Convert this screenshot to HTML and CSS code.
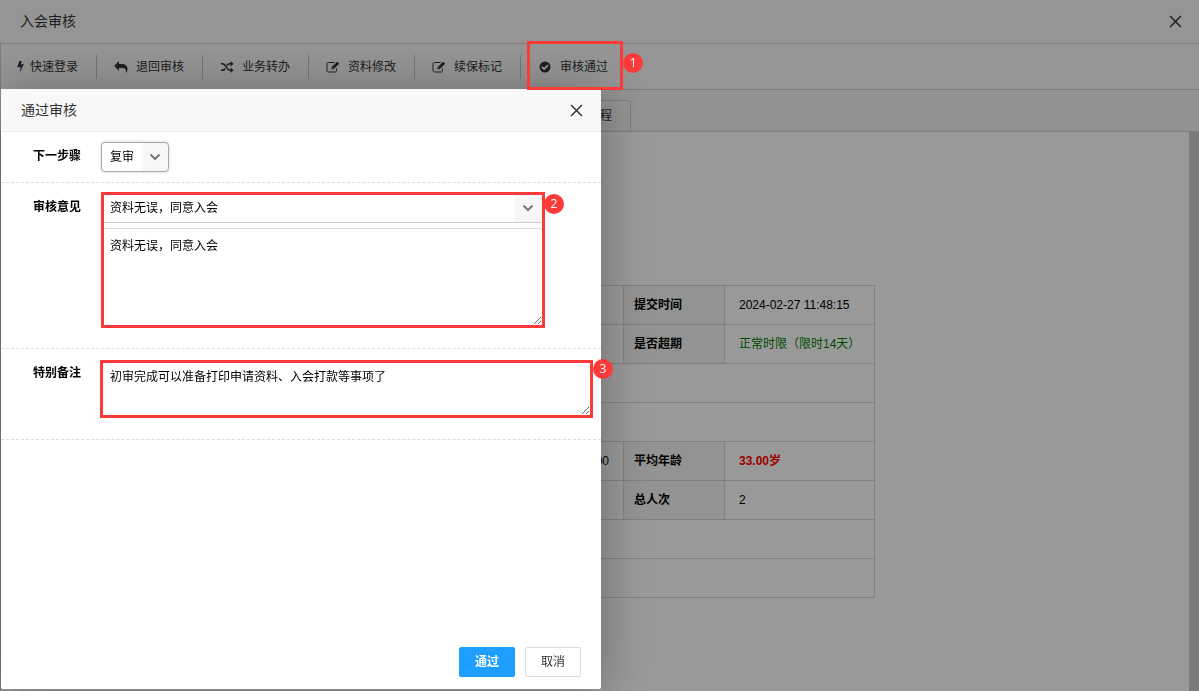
FILE: index.html
```
<!DOCTYPE html>
<html lang="zh-CN">
<head>
<meta charset="utf-8">
<title>入会审核</title>
<link rel="stylesheet" href="styles.css">
</head>
<body>
<div class="page">
  <header class="page-head">
    <h1 class="title">入会审核</h1>
    <button class="close" type="button" aria-label="关闭"><svg viewBox="0 0 12 12"><path d="M1 1l10 10M11 1L1 11"/></svg></button>
  </header>
  <nav class="toolbar">
    <button class="tool tool-first" type="button"><svg class="icon icon-bolt" viewBox="0 0 7 12"><path d="M2.4 0h2.5L3.7 3.5 7 2.8 2.6 12 3.7 5.7.2 6.5z"/></svg>快速登录</button>
    <button class="tool" type="button"><svg class="icon" viewBox="0 0 14 12"><path d="M5 0v3h2.5C11.500 3 13.500 5 13.500 8c0 1.600-.6 3-1.500 4 .5-3.800-1.400-5-4.500-5H5v3L.2 5z"/></svg>退回审核</button>
    <button class="tool" type="button"><svg class="icon" viewBox="0 0 14 12"><path class="stroke" d="M1 2.700h1.500c3.700 0 4 6.600 7.500 6.600h1.500M1 9.300h1.500c1.200 0 2-.8 2.600-1.800M6.900 4.500C7.500 3.500 8.500 2.700 9.800 2.700h1.700"/><path d="M10.500 0l3 2.700-3 2.700zM10.500 6.600l3 2.700-3 2.700z"/></svg>业务转办</button>
    <button class="tool" type="button"><svg class="icon" viewBox="0 0 14 12"><path class="thin" d="M8.500 1.500h-6c-1 0-1.500.5-1.500 1.500v6.500c0 1 .5 1.500 1.500 1.500h6.500c1 0 1.500-.5 1.500-1.500V7.500"/><path d="M11.200.7l2 2-5.700 5.600H5.400V6.300zM6.200 6.600v1h1v-.5l-.6-.5z" fill-rule="evenodd"/></svg>资料修改</button>
    <button class="tool" type="button"><svg class="icon" viewBox="0 0 14 12"><path class="thin" d="M8.500 1.500h-6c-1 0-1.500.5-1.500 1.500v6.500c0 1 .5 1.500 1.500 1.500h6.500c1 0 1.500-.5 1.500-1.500V7.500"/><path d="M11.200.7l2 2-5.700 5.600H5.400V6.300zM6.200 6.600v1h1v-.5l-.6-.5z" fill-rule="evenodd"/></svg>续保标记</button>
    <button class="tool tool-last" type="button"><svg class="icon" viewBox="0 0 14 12"><circle cx="7" cy="6" r="5.500"/><path class="tick" d="M4 5.800l2.200 2.200 3.800-3.800"/></svg>审核通过<span class="mark mark-tool"><span class="badge">1</span></span></button>
  </nav>
  <div class="tabs"><button class="tab" type="button">流程</button></div>
  <main class="content">
    <table class="info">
      <colgroup><col class="c-label"><col><col class="c-label"><col class="c-mid"><col class="c-label"><col class="c-value"></colgroup>
      <tr><th></th><td></td><th></th><td></td><th>提交时间</th><td>2024-02-27 11:48:15</td></tr>
      <tr><th></th><td></td><th></th><td></td><th>是否超期</th><td class="ok">正常时限（限时14天）</td></tr>
      <tr><th></th><td colspan="5"></td></tr>
      <tr><th></th><td colspan="5"></td></tr>
      <tr><th></th><td></td><th></th><td class="num">0.00</td><th>平均年龄</th><td class="warn">33.00岁</td></tr>
      <tr><th></th><td></td><th></th><td></td><th>总人次</th><td>2</td></tr>
      <tr><th></th><td colspan="5"></td></tr>
      <tr><th></th><td colspan="5"></td></tr>
    </table>
  </main>
</div>
<div class="shade"></div>
<section class="dialog" role="dialog" aria-labelledby="dialog-title">
  <header class="dialog-head">
    <h2 class="title" id="dialog-title">通过审核</h2>
    <button class="close" type="button" aria-label="关闭"><svg viewBox="0 0 12 12"><path d="M1 1l10 10M11 1L1 11"/></svg></button>
  </header>
  <form class="form">
    <div class="row">
      <label class="label" for="step">下一步骤</label>
      <div class="pick pick-small"><select id="step"><option>复审</option></select><svg class="chevron" viewBox="0 0 12 8"><path d="M1.500 1.500L6 6l4.500-4.500"/></svg></div>
    </div>
    <div class="row row-opinion">
      <label class="label" for="opinion">审核意见</label>
      <div class="field field-opinion">
        <div class="pick"><select id="preset" aria-label="常用意见"><option>资料无误，同意入会</option></select><svg class="chevron" viewBox="0 0 12 8"><path d="M1.500 1.500L6 6l4.500-4.500"/></svg></div>
        <textarea class="area area-tall" id="opinion">资料无误，同意入会</textarea>
        <span class="mark"><span class="badge">2</span></span>
      </div>
    </div>
    <div class="row row-note">
      <label class="label" for="note">特别备注</label>
      <div class="field field-note">
        <textarea class="area" id="note">初审完成可以准备打印申请资料、入会打款等事项了</textarea>
        <span class="mark"><span class="badge">3</span></span>
      </div>
    </div>
  </form>
  <footer class="actions">
    <button class="btn btn-main" type="button">通过</button>
    <button class="btn" type="button">取消</button>
  </footer>
</section>
</body>
</html>
```
FILE: styles.css
```
* { box-sizing: border-box; }
body, button, select, textarea {
  font-family: "Liberation Sans", "Noto Sans CJK SC", sans-serif;
  font-size: 12px;
  line-height: 18px;
  color: #000;
}
body { margin: 0; overflow: hidden; }
button { padding: 0; border: 0; background: none; }

.page { display: flex; flex-direction: column; height: 100vh; }
.page-head, .dialog-head {
  display: flex;
  align-items: center;
  justify-content: space-between;
  flex: none;
  height: 43px;
  padding: 0 18px 0 20px;
  background: #f8f8f8;
  border-bottom: 1px solid #eee;
}
.page-head { height: 44px; padding-right: 17px; border-color: #d0d0d0; }
.title { margin: 0; font-size: 14px; line-height: 20px; font-weight: 400; color: #333; }
.page-head .title { padding-bottom: 2px; }
.close { display: flex; padding: 0; }
.close svg { width: 13px; height: 13px; fill: none; stroke: #2e2d3c; stroke-width: 1.3; }

.toolbar {
  display: flex;
  align-items: center;
  flex: none;
  height: 46px;
  background: #f9f9f9;
  border-bottom: 1px solid #d0d0d0;
  border-left: 1px solid #d0d0d0;
}
.tool {
  position: relative;
  display: flex;
  align-items: center;
  gap: 8px;
  height: 24px;
  padding: 0 18px 0 17px;
  border-right: 1px solid #c4c4c4;
  color: #333;
}
.tool-first { gap: 6px; padding-left: 16px; }
.tool-last { padding-right: 15px; border-right: 0; }
.icon { width: 14px; height: 12px; fill: #333; }
.icon-bolt { width: 7px; }
.icon .stroke { fill: none; stroke: #333; stroke-width: 1.6; }
.icon .thin { fill: none; stroke: #333; stroke-width: 1; }
.icon .tick { fill: none; stroke: #fff; stroke-width: 1.8; }

.tabs {
  display: flex;
  align-items: flex-end;
  flex: none;
  height: 42px;
  padding-left: 569px;
  background: #f3f3f3;
  border-bottom: 1px solid #d0d0d0;
}
.tab {
  height: 31px;
  padding: 0 18px;
  background: #f5f5f5;
  border: 1px solid #d0d0d0;
  border-bottom: 0;
  border-radius: 4px 4px 0 0;
  color: #333;
}

.content {
  flex: 1;
  padding: 153px 0 0 15px;
  border-left: 1px solid #d0d0d0;
  border-right: 10px solid #cbcbcb;
  overflow: hidden;
}
.info { width: 859px; table-layout: fixed; border-collapse: collapse; }
.info th, .info td { height: 39px; padding: 0 14px; border: 1px solid #d8d8d8; text-align: left; }
.info th { padding: 0 10px; background: #f5f5f5; }
.info td { white-space: nowrap; }
.c-label { width: 101px; }
.c-mid, .c-value { width: 150px; }
.info .ok { color: #008000; }
.info .num { text-align: right; }
.info .warn { color: #f00; font-weight: 700; }

.shade { position: fixed; inset: 0; z-index: 10; background: rgba(0, 0, 0, .4); }

.dialog {
  position: fixed;
  z-index: 20;
  top: 89px;
  bottom: 2px;
  left: 1px;
  display: flex;
  flex-direction: column;
  width: 600px;
  max-width: 100%;
  background: #fff;
  border-radius: 2px;
  box-shadow: 1px 1px 50px rgba(0, 0, 0, .3);
}
.form { flex: 1; }
.row {
  display: flex;
  align-items: flex-start;
  gap: 19px;
  padding: 10px 8px 10px 32px;
  border-bottom: 1px dashed #ddd;
}
.row-opinion { padding: 9px 8px 20px 32px; }
.row-opinion .label { padding-top: 6px; }
.row-note { padding: 11px 8px 21px 32px; }
.label { flex: none; width: 49px; padding-top: 5px; font-weight: 700; }
.row-note .label { padding-top: 4px; }
.field { position: relative; display: grid; gap: 5px; }
.field-opinion { width: 444px; }
.field-note { flex: 1; }

.pick {
  position: relative;
  height: 31px;
  border: 1px solid #ccc;
  border-radius: 4px;
  overflow: hidden;
  background: linear-gradient(#f7f7f7, #f7f7f7) right / 29px 100% no-repeat #fff;
}
.pick-small { width: 68px; height: 30px; border-color: #aaa; background-size: 26px 100%; box-shadow: 0 0 3px rgba(0, 0, 0, .2); }
.pick select {
  width: 100%;
  height: 100%;
  padding: 0 28px 0 8px;
  border: 0;
  background: none;
  appearance: none;
}
.chevron {
  position: absolute;
  top: 11px;
  right: 7px;
  width: 12px;
  height: 8px;
  fill: none;
  stroke: #777;
  stroke-width: 2;
  pointer-events: none;
}
.pick-small .chevron { top: 10px; }
.field .chevron { right: 10px; }
.area {
  display: block;
  width: 100%;
  height: 58px;
  padding: 7px 8px;
  border: 1px solid #ddd;
  border-right-width: 3px;
  border-bottom-width: 3px;
  border-radius: 4px;
  resize: vertical;
}
.area-tall { height: 100px; padding-top: 8px; }

.mark { position: absolute; z-index: 30; inset: 0; border: 3px solid #fd3a3a; pointer-events: none; }
.field-note .mark { left: -1px; }
.mark-tool { inset: -14px 0 -11px 6px; }
.badge {
  position: absolute;
  top: -1px;
  left: calc(100% + 2px);
  width: 20px;
  height: 20px;
  border-radius: 50%;
  background: #fd3a3a;
  color: #fff;
  font-family: "Open Sans", sans-serif;
  line-height: 20px;
  text-align: center;
}
.field-note .badge { top: -4px; left: calc(100% + 3px); }
.mark-tool .badge { top: 9px; left: calc(100% + 3px); }

.actions { display: flex; justify-content: flex-end; gap: 10px; padding: 12px 20px; }
.btn { width: 56px; height: 30px; border: 1px solid #dedede; border-radius: 2px; background: #fff; color: #333; }
.btn-main { border-color: #1e9fff; background: #1e9fff; color: #fff; font-weight: 700; }
```
